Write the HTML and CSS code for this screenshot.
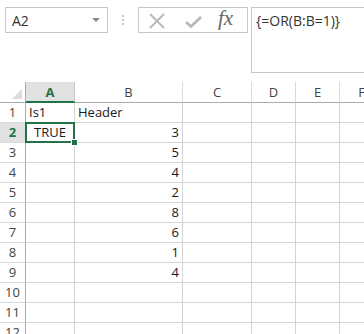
FILE: index.html
```html
<!DOCTYPE html>
<html lang="en">
<head>
<meta charset="UTF-8">
<title>Sheet</title>
<link rel="stylesheet" href="styles.css">
</head>
<body>
<div class="toolbar">
  <div class="name-box">
    <span>A2</span>
    <span class="arrow"></span>
  </div>
  <div class="grip"><i></i><i></i><i></i></div>
  <div class="buttons">
    <svg class="btn-x" width="18" height="16" viewBox="0 0 18 16">
      <path d="M2 1 L16 15 M16 1 L2 15" stroke="#b9b9b9" stroke-width="2" fill="none"/>
    </svg>
    <svg class="btn-ok" width="17" height="12" viewBox="0 0 17 12">
      <path d="M1 6 L6 10.5 L16 1" stroke="#b9b9b9" stroke-width="2.8" fill="none"/>
    </svg>
    <span class="fx">fx</span>
  </div>
  <div class="formula">{=OR(B:B=1)}</div>
</div>

<div class="sheet">
  <div class="corner"><span></span></div>
  <div class="col-head sel">A</div>
  <div class="col-head">B</div>
  <div class="col-head">C</div>
  <div class="col-head">D</div>
  <div class="col-head">E</div>
  <div class="col-head">F</div>

  <div class="row-head">1</div>
  <div class="cell">Is1</div>
  <div class="cell">Header</div>
  <div class="cell"></div><div class="cell"></div><div class="cell"></div><div class="cell"></div>

  <div class="row-head sel">2</div>
  <div class="cell active">TRUE<span class="handle"></span></div>
  <div class="cell num">3</div>
  <div class="cell"></div><div class="cell"></div><div class="cell"></div><div class="cell"></div>

  <div class="row-head">3</div>
  <div class="cell"></div><div class="cell num">5</div>
  <div class="cell"></div><div class="cell"></div><div class="cell"></div><div class="cell"></div>

  <div class="row-head">4</div>
  <div class="cell"></div><div class="cell num">4</div>
  <div class="cell"></div><div class="cell"></div><div class="cell"></div><div class="cell"></div>

  <div class="row-head">5</div>
  <div class="cell"></div><div class="cell num">2</div>
  <div class="cell"></div><div class="cell"></div><div class="cell"></div><div class="cell"></div>

  <div class="row-head">6</div>
  <div class="cell"></div><div class="cell num">8</div>
  <div class="cell"></div><div class="cell"></div><div class="cell"></div><div class="cell"></div>

  <div class="row-head">7</div>
  <div class="cell"></div><div class="cell num">6</div>
  <div class="cell"></div><div class="cell"></div><div class="cell"></div><div class="cell"></div>

  <div class="row-head">8</div>
  <div class="cell"></div><div class="cell num">1</div>
  <div class="cell"></div><div class="cell"></div><div class="cell"></div><div class="cell"></div>

  <div class="row-head">9</div>
  <div class="cell"></div><div class="cell num">4</div>
  <div class="cell"></div><div class="cell"></div><div class="cell"></div><div class="cell"></div>

  <div class="row-head">10</div>
  <div class="cell"></div><div class="cell"></div>
  <div class="cell"></div><div class="cell"></div><div class="cell"></div><div class="cell"></div>

  <div class="row-head">11</div>
  <div class="cell"></div><div class="cell"></div>
  <div class="cell"></div><div class="cell"></div><div class="cell"></div><div class="cell"></div>

  <div class="row-head">12</div>
  <div class="cell"></div><div class="cell"></div>
  <div class="cell"></div><div class="cell"></div><div class="cell"></div><div class="cell"></div>
</div>
</body>
</html>
```

FILE: styles.css
```css
body {
  margin: 0;
  background: #fff;
  color: #222;
  font-family: "Open Sans", "Noto Sans", sans-serif;
  font-size: 13px;
  overflow: hidden;
}

/* formula bar */
.toolbar {
  display: flex;
  align-items: flex-start;
  height: 82px;
  padding: 7px 0 0 5px;
  box-sizing: border-box;
}
.name-box {
  width: 103px;
  height: 26px;
  box-sizing: border-box;
  border: 1px solid #c6c6c6;
  display: flex;
  align-items: center;
  justify-content: space-between;
  padding: 0 7px 0 6px;
  font-size: 14px;
  color: #333;
}
.arrow {
  width: 0;
  height: 0;
  border-left: 4px solid transparent;
  border-right: 4px solid transparent;
  border-top: 4px solid #8a8a8a;
}
.grip {
  width: 30px;
  height: 26px;
  display: flex;
  flex-direction: column;
  align-items: center;
  justify-content: center;
  gap: 2px;
}
.grip i {
  width: 2px;
  height: 2px;
  background: #c4c4c4;
}
.buttons {
  width: 110px;
  height: 26px;
  box-sizing: border-box;
  border: 1px solid #c6c6c6;
  display: flex;
  align-items: center;
  padding-left: 9px;
}
.btn-x {
  margin-top: 1px;
}
.btn-ok {
  margin-left: 19px;
  margin-top: 4px;
}
.fx {
  margin-left: 16px;
  font-family: "Liberation Serif", "DejaVu Serif", serif;
  font-style: italic;
  font-size: 21px;
  color: #666;
  margin-top: -3px;
}
.formula {
  flex: 1;
  margin-left: 3px;
  margin-right: -10px;
  height: 66px;
  box-sizing: border-box;
  border: 1px solid #c6c6c6;
  padding: 3px 0 0 4px;
  font-size: 14px;
  color: #333;
}

/* grid */
.sheet {
  display: grid;
  grid-template-columns: 26px 49px 108px 69px 44px 44px 44px;
  grid-template-rows: 21px;
  grid-auto-rows: 20px;
}
.sheet > div {
  box-sizing: border-box;
  border-right: 1px solid #d4d4d4;
  border-bottom: 1px solid #d4d4d4;
}
.corner {
  position: relative;
  border-right-color: #ababab !important;
  border-bottom-color: #ababab !important;
}
.corner span {
  position: absolute;
  right: 3px;
  bottom: 3px;
  width: 0;
  height: 0;
  border-left: 10px solid transparent;
  border-bottom: 10px solid #dcdcdc;
}
.col-head {
  text-align: center;
  line-height: 20px;
  color: #444;
  font-size: 13px;
  border-bottom-color: #ababab !important;
  border-right-color: #dadada !important;
}
.col-head.sel {
  background: #e1e1e1;
  color: #217346;
  font-weight: bold;
  border-bottom: 2px solid #217346 !important;
  border-right-color: #c6c6c6 !important;
}
.row-head {
  text-align: center;
  line-height: 19px;
  color: #444;
  border-right-color: #ababab !important;
  border-bottom-color: #dadada !important;
}
.row-head.sel {
  background: #e1e1e1;
  color: #217346;
  font-weight: bold;
}
.cell {
  padding: 0 3px;
  line-height: 19px;
  white-space: nowrap;
  color: #1a1a1a;
}
.cell.num {
  text-align: right;
}
.cell.active {
  position: relative;
  text-align: center;
}
.cell.active::before {
  content: "";
  position: absolute;
  left: -1px;
  top: -1px;
  right: -1px;
  bottom: -1px;
  border: 2px solid #217346;
}
.handle {
  position: absolute;
  right: -4px;
  bottom: -4px;
  width: 5px;
  height: 5px;
  background: #217346;
  border: 1px solid #fff;
}
```
